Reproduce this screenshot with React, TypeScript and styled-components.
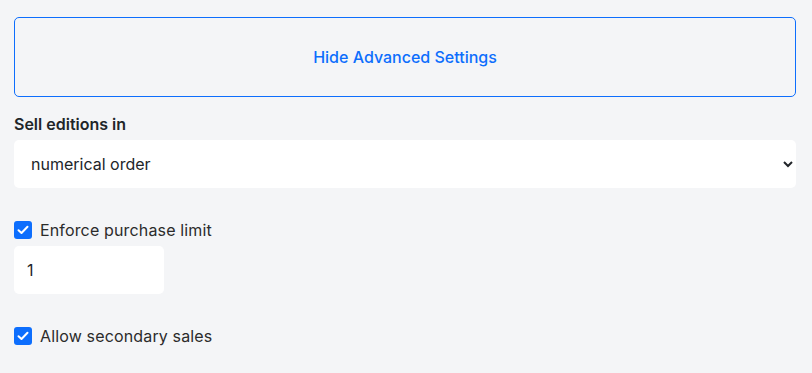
import React, { useState } from "react";
import styled, { createGlobalStyle } from "styled-components";

const Global = createGlobalStyle`
  html, body { margin: 0; padding: 0; background: #f4f5f7; }
  body { font-family: Inter, "Noto Sans", sans-serif; color: #212529; }
  * { box-sizing: border-box; }
`;

const Page = styled.div`
  padding: 17px 16px 0 14px;
  display: flex;
  flex-direction: column;
`;

const ToggleButton = styled.button`
  height: 80px;
  width: 100%;
  background: transparent;
  border: 1px solid #0d6efd;
  border-radius: 5px;
  color: #0d6efd;
  font-family: Inter, sans-serif;
  font-size: 16px;
  font-weight: 500;
  cursor: pointer;
`;

const Label = styled.label`
  display: block;
  margin-top: 17px;
  margin-bottom: 6px;
  font-size: 16px;
  font-weight: 600;
  line-height: 20px;
  color: #212529;
`;

const Select = styled.select`
  height: 48px;
  width: 100%;
  border: none;
  border-radius: 5px;
  background: #fff;
  font-family: Inter, sans-serif;
  font-size: 16px;
  color: #212529;
  padding: 0 10px 0 13px;
  outline: none;
`;

const CheckRow = styled.label<{ $top: number }>`
  display: flex;
  align-items: center;
  gap: 8px;
  margin-top: ${(p) => p.$top}px;
  font-size: 16px;
  line-height: 20px;
  letter-spacing: 0.15px;
  color: #2b2b2b;
`;

const Box = styled.span`
  width: 18px;
  height: 18px;
  border-radius: 3px;
  background: #0d6efd;
  display: inline-flex;
  align-items: center;
  justify-content: center;
`;

const NumberInput = styled.input`
  margin-top: 6px;
  width: 150px;
  height: 48px;
  border: none;
  border-radius: 5px;
  background: #fff;
  font-family: Inter, sans-serif;
  font-size: 16px;
  color: #212529;
  padding: 0 13px;
  outline: none;
`;

const Check = () => (
  <Box>
    <svg width="12" height="10" viewBox="0 0 12 10" fill="none">
      <path d="M1.5 5.2 L4.5 8 L10.5 1.8" stroke="#fff" strokeWidth="2" strokeLinecap="round" strokeLinejoin="round" />
    </svg>
  </Box>
);

export default function App() {
  const [val, setVal] = useState("1");
  return (
    <>
      <Global />
      <Page>
        <ToggleButton>Hide Advanced Settings</ToggleButton>
        <Label>Sell editions in</Label>
        <Select defaultValue="numerical">
          <option value="numerical">numerical order</option>
          <option value="random">random order</option>
        </Select>
        <CheckRow $top={32}>
          <Check />
          Enforce purchase limit
        </CheckRow>
        <NumberInput value={val} onChange={(e) => setVal(e.target.value)} />
        <CheckRow $top={32}>
          <Check />
          Allow secondary sales
        </CheckRow>
      </Page>
    </>
  );
}
